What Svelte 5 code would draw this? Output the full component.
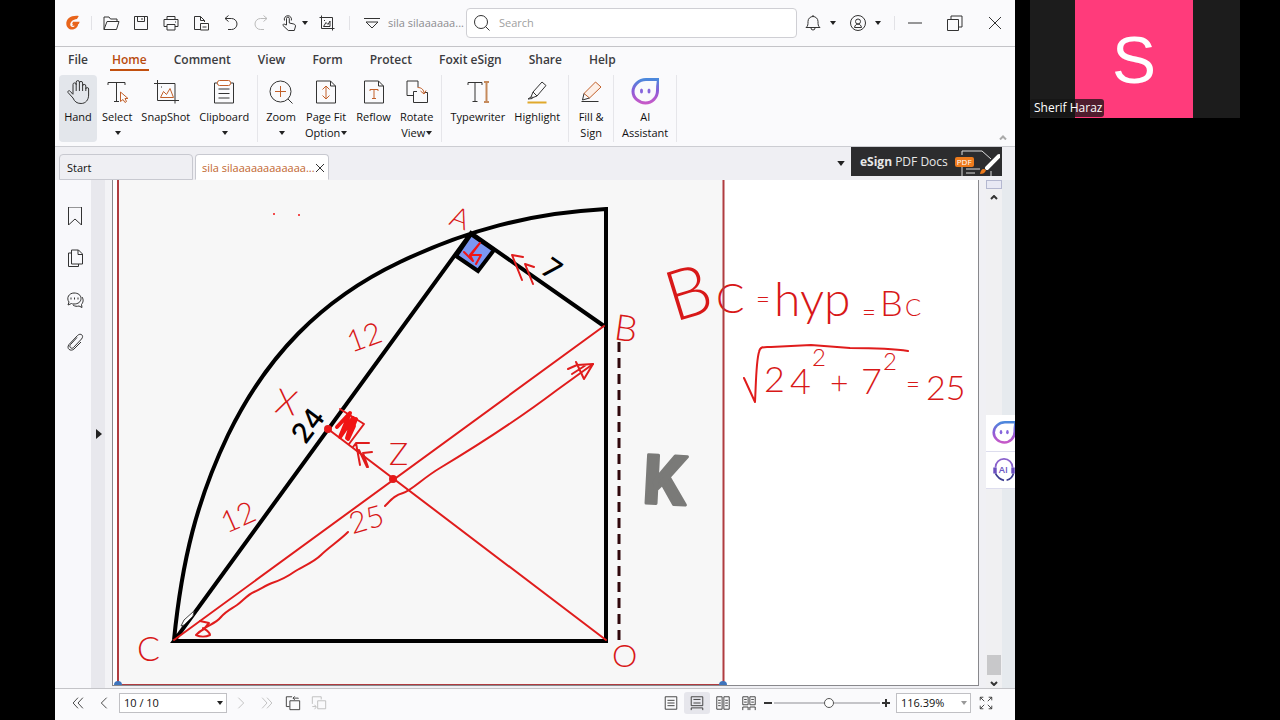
<script lang="ts">
    type Tool = { label: string; icon: string; second?: string; arrow?: boolean; active?: boolean };

    const menus = ["File", "Home", "Comment", "View", "Form", "Protect", "Foxit eSign", "Share", "Help"];

    const ribbon: Tool[][] = [
        [
            { label: "Hand", icon: "hand", active: true },
            { label: "Select", icon: "select", arrow: true },
            { label: "SnapShot", icon: "snapshot" },
            { label: "Clipboard", icon: "clipboard", arrow: true },
        ],
        [
            { label: "Zoom", icon: "zoom", arrow: true },
            { label: "Page Fit", second: "Option", icon: "fit", arrow: true },
            { label: "Reflow", icon: "reflow" },
            { label: "Rotate", second: "View", icon: "rotate", arrow: true },
        ],
        [
            { label: "Typewriter", icon: "typewriter" },
            { label: "Highlight", icon: "highlight" },
        ],
        [{ label: "Fill &", second: "Sign", icon: "sign" }],
        [{ label: "AI", second: "Assistant", icon: "ai" }],
    ];

    const quick = [
        { name: "Open", icon: "open" },
        { name: "Save", icon: "save" },
        { name: "Print", icon: "print" },
        { name: "Export", icon: "export" },
        { name: "Undo", icon: "undo" },
        { name: "Redo", icon: "redo" },
    ];

    const panels = [
        { name: "Bookmarks", icon: "bookmark" },
        { name: "Pages", icon: "pages" },
        { name: "Comments", icon: "comments" },
        { name: "Attachments", icon: "clip" },
    ];

    const layouts = [
        { name: "Single page", icon: "single" },
        { name: "Continuous", icon: "continuous" },
        { name: "Facing", icon: "facing" },
        { name: "Continuous facing", icon: "facingContinuous" },
    ];

    // 28px grid, ribbon
    const large: Record<string, string> = {
        hand: `<path d="M9 16V6.500a1.600 1.600 0 0 1 3.200 0V13M12.200 7V4.200a1.600 1.600 0 0 1 3.200 0V13M15.400 5a1.600 1.600 0 0 1 3.200 0v8M18.600 8a1.600 1.600 0 0 1 3.200 0v5M21.800 11a1.400 1.400 0 0 1 2.800 0v6c0 5-3 8.500-7.500 8.500-4.500 0-6.500-2-8.100-5.500L4 14.500c-.700-1.700 1.500-2.500 2.500-1L9 16.500"/>`,
        select: `<path d="M5 7V4.500h17V7M13.500 4.500v19M11 23.500h5"/><path class="accent" d="M17.500 14v9.500l2.500-2 2 3 1.500-1-1.500-3h3z"/>`,
        snapshot: `<path d="M2 5.500h21v20M5.500 2v20.500H27"/><path class="accent" d="M8.500 19.500l3-6 3 3 3.500-6 3.500 9z"/><path d="M9 9h1"/>`,
        clipboard: `<path d="M8 5H4.500v20h19V5H20M8.500 11h11M8.500 15.500h11M8.500 20h11"/><rect class="accent paper" x="7.500" y="2.500" width="13" height="5" rx="2"/>`,
        zoom: `<circle cx="13.500" cy="13.500" r="10.500"/><path d="M21 21l4.500 4.500"/><path class="accent" d="M8 13.500h11M13.500 8v11"/>`,
        fit: `<path d="M4.500 3h14l5 5v17h-19zM18.500 3v5h5"/><path class="accent" d="M14 8v13M10.500 11.500L14 8l3.500 3.500M10.500 17.500L14 21l3.500-3.500"/>`,
        reflow: `<path d="M4.500 3h14l5 5v17h-19zM18.500 3v5h5"/><path class="accent" d="M10 13v-1.500h8V13M14 11.500v9M12 20.500h4"/>`,
        rotate: `<path d="M10 17.500H4V3h11v6M14 13.500h-3.500v11h14v-10h-3"/><path class="accent" d="M14.500 9.500c4 0 6.500 2 6.500 6.500M17.500 13l3.500 3 2-3.500"/>`,
        typewriter: `<path d="M4 7V4.500h14V7M11 4.500v19M8.500 23.500h5"/><path class="tan" d="M20 4h5M22.500 4v20M20 24h5"/>`,
        highlight: `<path d="M10 14l9-10 4 3.500-9 10.500zM10 14l-2 5 2 .500 4-1.500M8 19l-3 2 4.500-.500"/><path class="gold" d="M4.500 24.500h19"/>`,
        sign: `<path class="accent peach" d="M7 15.500L18.500 4 24 9 12.500 20z"/><path d="M7 15.500L5.500 22l7-2M4.500 23.500h17"/>`,
        ai: `<path class="ai" d="M15 1.500h12.500c-.500 3.500-1 6-1 11 0 7-5.500 12.500-12 12.500S2 20 2 13.500 8 1.500 15 1.500z"/><ellipse class="eye" cx="10.500" cy="13" rx="1.500" ry="2.500"/><ellipse class="eye" cx="18" cy="13" rx="1.500" ry="2.500"/>`,
    };

    // 18px grid, everything else
    const small: Record<string, string> = {
        open: `<path d="M2 15.500V3h5l1.500 2H15v2.500M2 15.500L5 7.500h12L14.500 15.500z"/>`,
        save: `<path d="M2.500 2.500h13v13h-13zM5.500 2.500v5h7v-5M10 4v2"/>`,
        print: `<path d="M5 5.500v-3h8v3M5 12.500H2v-7h14v7h-3M5 10.500h8v5.500H5zM13 8h1"/>`,
        export: `<path d="M8 15.500H2.500v-13h6l4 4V8M8.500 2.500v4h4M8.500 9.500h8v6.500h-8zM10.500 13h4"/>`,
        undo: `<path d="M6.500 1.500L3 4.500l3.500 3M3 4.500h6.500a5.500 5.500 0 0 1 0 11H6"/>`,
        redo: `<path d="M11.500 1.500L15 4.500l-3.500 3M15 4.500H8.500a5.500 5.500 0 0 0 0 11H12"/>`,
        touch: `<path d="M6.500 11V4.500a1.400 1.400 0 0 1 2.800 0V9l4.500 1c1.500.500 2 1.500 1.500 3l-1 3.500h-6L3 11.500c-.500-1.200 1-2 2-1zM4.500 6.500a3.600 3.600 0 1 1 6.800 0"/>`,
        crop: `<path d="M1.500 3.500h13v13M3.500 1.500v13h13M5.500 12.500l2.500-4 2 2 2-3.500v5.500zM6 6.500h1"/>`,
        more: `<path d="M1 4.500h16M3 8h12l-6 6z"/>`,
        search: `<circle cx="8" cy="8" r="6.500"/><path d="M12.500 12.500l4 4"/>`,
        bell: `<path d="M2 13.500c2-1.500 2-3 2-6a5 5 0 0 1 10 0c0 3 0 4.500 2 6zM7 14a2 2 0 0 0 4 0M9 2.500V1"/>`,
        user: `<circle cx="9" cy="9" r="7.500"/><circle cx="9" cy="7.500" r="2.500"/><path d="M5.500 13.500c.500-4.500 6.500-4.500 7 0z"/>`,
        minimize: `<path d="M2 9h14"/>`,
        restore: `<path d="M1.500 5.500h11v11h-11zM5 5V2h11v11h-3"/>`,
        close: `<path d="M3 3l12 12M15 3L3 15"/>`,
        bookmark: `<path d="M2.500 0h13v18L9 12l-6.500 6z"/>`,
        pages: `<path d="M5.500 1h7l4 4v10h-11zM12 1v4.500h4.500M5.500 4H2.500v13.500h10V15"/>`,
        comments: `<path d="M8 2c4 0 7 2 7 5.500S12 13 8 13c-1 0-2 0-2.500-.500L2 14l1-3C0 7 3 2 8 2zM16 6c2 3 1 5.500-.500 7.500l.500 3-3-1.500c-2 .500-4 .500-6-1"/><path class="heavy" d="M4.500 7.500h1M8 7.500h1M11.500 7.500h1"/>`,
        clip: `<path d="M11 4.500l-6.500 7c-2 2.500 1 5 3 3l8-8.500c3-3.500-1-6.500-4-3.500l-8.500 9c-3 4 1.500 7.500 5 4.500l7-7"/>`,
        first: `<path d="M9 3L3.500 9 9 15M14.500 3L9 9l5.500 6"/>`,
        prev: `<path d="M12 3L6 9l6 6"/>`,
        next: `<path d="M6 3l6 6-6 6"/>`,
        last: `<path d="M3.500 3L9 9l-5.500 6M9 3l5.500 6L9 15"/>`,
        back: `<path d="M5 13H1.500V2H8M15 4v-.500H9M11 1.500l-2 2 2 2M5.500 6.500h11v10h-11z"/>`,
        forward: `<path d="M1.500 10V2h10v3M1.500 13h4M4 11l2 2.500L4 16M7.500 6.500h9v9h-9z"/>`,
        single: `<path d="M2.500 2h13v14h-13zM5 6h8M5 9h8M5 12h8"/>`,
        continuous: `<path d="M2.500 2h13v10h-13zM5 5h8M5 9h8M2.500 17v-2.500h13V17"/>`,
        facing: `<path d="M2 2h6v14H2zM10 2h6v14h-6zM3.500 6h3M3.500 9h3M3.500 12h3M11.500 6h3M11.500 9h3M11.500 12h3"/>`,
        facingContinuous: `<path d="M2 2h6v9H2zM10 2h6v9h-6zM3.500 5h3M3.500 8h3M11.500 5h3M11.500 8h3M2 17v-3.500h6V17M10 17v-3.500h6V17"/>`,
        full: `<path d="M7 7L2.500 2.500M2.500 6V2.500H6M11 7l4.500-4.500M12 2.500h3.500V6M7 11l-4.500 4.500M2.500 12v3.500H6M11 11l4.500 4.500M12 15.500h3.500V12"/>`,
    };

    let page = $state("10 / 10");
    let scale = $state("116.39%");
    let zoomLevel = $state(52);
    let query = $state("");
</script>

{#snippet glyph(name: string)}
    <svg class="glyph" viewBox="0 0 18 18" aria-hidden="true">{@html small[name]}</svg>
{/snippet}

{#snippet caret()}
    <svg class="caret" viewBox="0 0 6 4" aria-hidden="true"><path d="M0 0h6L3 4z" /></svg>
{/snippet}

<svg class="defs" aria-hidden="true">
    <defs>
        <linearGradient id="aiGradient" x1="0" y1="0" x2="0" y2="1">
            <stop offset="0" stop-color="#4c88dc" />
            <stop offset="0.5" stop-color="#8b5cd8" />
            <stop offset="1" stop-color="#c659c8" />
        </linearGradient>
    </defs>
</svg>

<div class="share">
    <main class="app">
        <header class="titlebar">
            <svg class="logo" viewBox="0 0 18 18" aria-hidden="true">
                <path d="M15.500 1C7 0 1 4 1.500 10.500 2 15 6 17.500 10 16c3.500-1.200 5-4 5-7h-5.500L8 12h3c-1 2-4.500 2-5-.500C5.500 8 9 5 13.500 4.500z" />
                <path d="M9 7.500h7.500l-1 2.500H8z" />
            </svg>
            <span class="rule"></span>
            {#each quick as item}
                <button class="tool" class:dim={item.icon === "redo"} aria-label={item.name}>{@render glyph(item.icon)}</button>
            {/each}
            <button class="tool wide" aria-label="Touch mode">{@render glyph("touch")}{@render caret()}</button>
            <button class="tool" aria-label="Crop">{@render glyph("crop")}</button>
            <span class="rule"></span>
            <button class="tool" aria-label="Customize">{@render glyph("more")}</button>
            <span class="docname">sila silaaaaaa...</span>
            <label class="search">
                {@render glyph("search")}
                <input type="text" placeholder="Search" aria-label="Search" bind:value={query} />
            </label>
            <button class="tool account" aria-label="Notifications">{@render glyph("bell")}{@render caret()}</button>
            <button class="tool account" aria-label="Account">{@render glyph("user")}{@render caret()}</button>
            <span class="rule last"></span>
            <button class="tool win" aria-label="Minimize">{@render glyph("minimize")}</button>
            <button class="tool win" aria-label="Restore">{@render glyph("restore")}</button>
            <button class="tool win" aria-label="Close">{@render glyph("close")}</button>
        </header>

        <nav class="menus">
            {#each menus as menu}
                <button class:current={menu === "Home"}>{menu}</button>
            {/each}
        </nav>

        <section class="ribbon">
            {#each ribbon as group}
                <div class="group">
                    {#each group as tool}
                        <button class:active={tool.active}>
                            <svg class="big" viewBox="0 0 28 28" aria-hidden="true">{@html large[tool.icon]}</svg>
                            <span>{tool.label}</span>
                            <span class="second">
                                {tool.second ?? ""}{#if tool.arrow}{@render caret()}{/if}
                            </span>
                        </button>
                    {/each}
                </div>
            {/each}
            <button class="collapse" aria-label="Collapse ribbon">
                <svg viewBox="0 0 8 5" aria-hidden="true"><path d="M1 4.500l3-3 3 3" /></svg>
            </button>
        </section>

        <div class="tabs">
            <button class="tab">Start</button>
            <div class="tab open">
                <button class="tabname">sila silaaaaaaaaaaaa...</button>
                <button class="shut" aria-label="Close tab">
                    <svg viewBox="0 0 8 8" aria-hidden="true"><path d="M0 0l8 8M8 0L0 8" /></svg>
                </button>
            </div>
            <button class="tablist" aria-label="Tab list">
                <svg class="caret" viewBox="0 0 6 4" aria-hidden="true"><path d="M0 0h6L3 4z" /></svg>
            </button>
            <a class="banner" href="#esign">
                <span><b>eSign</b> PDF Docs</span>
                <span class="tag">PDF</span>
                <svg viewBox="0 0 40 29" aria-hidden="true">
                    <path d="M2 8V4h20l9 8M2 20v9M6 22h14M6 26h9M31 24v5" />
                    <path class="pen" d="M27 21L39 9" />
                    <path class="tip" d="M20 27c1-5 3-6 6-4-1 3-3 4-6 4z" />
                </svg>
            </a>
        </div>

        <section class="workspace">
            <aside class="rail">
                {#each panels as panel}
                    <button aria-label={panel.name}>{@render glyph(panel.icon)}</button>
                {/each}
            </aside>
            <button class="splitter" aria-label="Show panel">
                <svg viewBox="0 0 6 10" aria-hidden="true"><path d="M0 0l6 5-6 5z" /></svg>
            </button>

            <div class="paper">
                <svg class="sheet" viewBox="113 180 865 508" preserveAspectRatio="xMinYMin slice" role="img" aria-label="Geometry exercise">
                    <rect class="scan" x="118" y="180" width="605" height="505" />

                    <g class="figure">
                        <path d="M174 640C182 560 197 500 228 435 266 357 320 300 400 262 465 231 530 213 606 209V641H174L471 233L604 326" />
                        <path class="corner" d="M471 234l23 16-16 21-22-15z" />
                        <path class="dashes" d="M619 342V640" />
                    </g>
                    <g class="print">
                        <text x="-18" y="10" transform="translate(308 425) rotate(-53)">24</text>
                        <text x="-8" y="10" transform="translate(552 269) rotate(35)">7</text>
                        <text class="huge" x="-22" y="25" transform="translate(665 479) rotate(3)">K</text>
                    </g>

                    <g class="ink">
                        <path d="M174 640L604 326M606 640L328 429" />
                        <path d="M203 629c8-5 13-6 18-12s10-8 16-12 10-10 17-13 12-7 18-9 15-6 22-11 19-9 27-17 18-14 27-23M385 506c6-6 10-11 18-13s20-15 37-25c40-24 80-50 117-78l36-26" />
                        <path d="M200 621l9 2-5 6c-4 2-6 4-8 6 4 2 10 2 14 0 0-3-4-5-7-7" />
                        <path d="M568 369l9-4 16-1-9 15-8-17M572 374l14-9" />
                        <path d="M353 447l3-4h13M356 443l4 22M363 453l9-1M363 453l5 14M359 450l8 17" />
                        <path d="M523 257l-11-2 10 25M534 267l-9-3 8 20" />
                        <path d="M340 409l24 15-15 20" />
                        <path class="scribble" d="M337 427l13-14-10 24 13-19-6 20 9-19-8 20 6-13" />
                        <path class="scribble thin" d="M464 252l9 9-3-6 10-12-9 12 10 0-5 9" />
                        <circle cx="328" cy="429" r="3" />
                        <circle cx="393" cy="479" r="3" />
                        <circle class="speck" cx="274" cy="214" r="1" />
                        <circle class="speck" cx="299" cy="215" r="1" />
                        <path d="M744 378l11 24c1-18 1-40 4-50 1-6 5-5 12-5l40-2 39 3c20 0 40 0 58 3" />
                        <text x="451" y="228" transform="rotate(20 460 218)" font-size="28">A</text>
                        <text x="347" y="348" transform="rotate(-20 363 338)" font-size="30">12</text>
                        <text x="276" y="414" transform="rotate(10 286 402)" font-size="34">X</text>
                        <text x="221" y="528" transform="rotate(-24 237 518)" font-size="30">12</text>
                        <text x="389" y="465" font-size="32">Z</text>
                        <text x="349" y="530" transform="rotate(-16 366 520)" font-size="30">25</text>
                        <text x="137" y="661" font-size="34">C</text>
                        <text x="612" y="667" font-size="32">O</text>
                        <text x="615" y="341" transform="rotate(8 627 326)" font-size="36">B</text>
                        <text x="667" y="317" transform="rotate(-17 688 295)" font-size="70">B</text>
                        <text x="716" y="313" font-size="42">C</text>
                        <text x="756" y="308" font-size="24">=</text>
                        <text x="774" y="316" font-size="48">hyp</text>
                        <text x="862" y="321" font-size="24">=</text>
                        <text x="880" y="316" font-size="36">B</text>
                        <text x="905" y="316" font-size="24">C</text>
                        <text x="764" y="392" font-size="36">2</text>
                        <text x="790" y="394" font-size="36">4</text>
                        <text x="812" y="366" font-size="24">2</text>
                        <text x="830" y="394" font-size="32">+</text>
                        <text x="861" y="394" font-size="36">7</text>
                        <text x="883" y="370" font-size="24">2</text>
                        <text x="906" y="393" font-size="24">=</text>
                        <text x="926" y="400" font-size="34">25</text>
                    </g>

                    <path class="frame" d="M118 180V685H723.500V180" />
                    <circle class="handle" cx="118" cy="685" r="4" />
                    <circle class="handle" cx="723" cy="685" r="4" />
                    <path class="nib" d="M181 626l3-6 10-9-1 5-9 9z" />
                </svg>
            </div>

            <div class="scrollbar">
                <span class="splitbox"></span>
                <button aria-label="Scroll up"><svg viewBox="0 0 8 5" aria-hidden="true"><path d="M1 4l3-3 3 3" /></svg></button>
                <span class="track"><span class="thumb"></span></span>
                <button aria-label="Scroll down"><svg viewBox="0 0 8 5" aria-hidden="true"><path d="M1 1l3 3 3-3" /></svg></button>
            </div>
            <div class="edge"></div>

            <div class="assistants">
                <button aria-label="AI assistant">
                    <svg viewBox="0 0 28 28" aria-hidden="true">{@html large.ai}</svg>
                </button>
                <button aria-label="AI support">
                    <svg viewBox="0 0 28 28" aria-hidden="true">
                        <path class="headset" d="M4 11a10 10 0 0 1 20 0" />
                        <path class="cable" d="M4 18c2 4 5 7 10 8M25 18c-1 5-4 7-8 8" />
                        <path class="cups" d="M3.500 11v7M24.500 11v7" />
                        <text x="8" y="18">AI</text>
                    </svg>
                </button>
            </div>
        </section>

        <footer class="status">
            <button class="step" aria-label="First page">{@render glyph("first")}</button>
            <button class="step" aria-label="Previous page">{@render glyph("prev")}</button>
            <span class="combo pageno">
                <select aria-label="Page" bind:value={page}><option>10 / 10</option></select>
                {@render caret()}
            </span>
            <button class="step dim" aria-label="Next page">{@render glyph("next")}</button>
            <button class="step dim" aria-label="Last page">{@render glyph("last")}</button>
            <button class="step" aria-label="Previous view">{@render glyph("back")}</button>
            <button class="step dim" aria-label="Next view">{@render glyph("forward")}</button>
            <span class="fill"></span>
            {#each layouts as layout}
                <button class="step" class:chosen={layout.icon === "continuous"} aria-label={layout.name}>{@render glyph(layout.icon)}</button>
            {/each}
            <button class="sign" aria-label="Zoom out"><svg viewBox="0 0 8 8" aria-hidden="true"><path d="M0 4h8" /></svg></button>
            <input class="slider" type="range" min="0" max="100" aria-label="Zoom" bind:value={zoomLevel} />
            <button class="sign" aria-label="Zoom in"><svg viewBox="0 0 8 8" aria-hidden="true"><path d="M0 4h8M4 0v8" /></svg></button>
            <span class="combo level">
                <select aria-label="Zoom level" bind:value={scale}><option>116.39%</option></select>
                {@render caret()}
            </span>
            <button class="step" aria-label="Full screen">{@render glyph("full")}</button>
        </footer>
    </main>

    <aside class="people">
        <div class="tile">
            <div class="avatar">S</div>
            <span class="name">Sherif Haraz</span>
        </div>
    </aside>
</div>

<style>
    :global(body) {
        background: #000;
    }

    .defs {
        position: absolute;
        width: 0;
        height: 0;
    }

    .share {
        display: grid;
        grid-template-columns: minmax(0, 1fr) 265px;
        height: 100vh;
        padding-left: 55px;
        box-sizing: border-box;
        overflow: hidden;
        font-family: "Open Sans", "Noto Sans", sans-serif;
        font-size: 11px;
        line-height: 16px;
        color: #222;
    }

    .app {
        display: flex;
        flex-direction: column;
        min-width: 0;
        min-height: 0;
        background: #fafafc;
    }

    button,
    input,
    select {
        margin: 0;
        padding: 0;
        border: none;
        background: none;
        font: inherit;
        color: inherit;
    }

    svg {
        display: block;
        flex: none;
        fill: none;
        stroke: #333;
    }

    .glyph {
        width: 18px;
        height: 18px;
    }

    .caret {
        width: 6px;
        height: 4px;
        fill: #222;
        stroke: none;
    }

    .dim svg {
        stroke: #bbb;
    }

    /* title bar */
    .titlebar {
        display: flex;
        align-items: center;
        height: 46px;
        padding: 0 0 0 10px;
        border-bottom: 1px solid #c4c4c8;
        flex: none;
    }

    .logo {
        width: 16px;
        height: 16px;
        fill: #e8641b;
        stroke: none;
    }

    .rule {
        width: 1px;
        height: 14px;
        margin: 0 7px;
        background: #e2e2e6;
    }

    .rule.last {
        margin-right: 0;
    }

    .logo + .rule {
        margin: 0 4px 0 10px;
    }

    .tool {
        display: flex;
        align-items: center;
        justify-content: center;
        gap: 4px;
        width: 30px;
        height: 30px;
        flex: none;
    }

    .tool .glyph {
        width: 18px;
        height: 18px;
    }

    .tool.wide {
        width: 36px;
    }

    .tool.account {
        width: 45px;
        gap: 8px;
    }

    .tool.win {
        width: 40px;
    }

    .docname {
        width: 78px;
        padding-left: 1px;
        white-space: nowrap;
        color: #8c8c90;
    }

    .search {
        display: flex;
        align-items: center;
        gap: 8px;
        flex: 1;
        min-width: 0;
        height: 28px;
        padding: 0 6px;
        border: 1px solid #cfcfd4;
        border-radius: 4px;
        background: #fff;
    }

    .search input {
        flex: 1;
        min-width: 0;
        outline: none;
    }

    .search input::placeholder {
        color: #a0a0a0;
        opacity: 1;
    }

    /* menus */
    .menus {
        display: flex;
        gap: 1px;
        height: 28px;
        flex: none;
        font-size: 12px;
        font-weight: 600;
        color: #3c3c40;
    }

    .menus button {
        height: 24px;
        margin: 0 11px;
        padding: 4px 2px 0;
        border-bottom: 2px solid transparent;
        white-space: nowrap;
    }

    .menus button:first-child {
        margin-right: 8px;
    }

    .menus .current {
        border-color: #c2500f;
        color: #b84a0c;
    }

    /* ribbon */
    .ribbon {
        display: flex;
        height: 71px;
        padding-left: 4px;
        border-bottom: 1px solid #cccdd2;
        flex: none;
    }

    .group {
        display: flex;
        gap: 1px;
        height: 67px;
        margin-right: 4px;
        padding-right: 4px;
        border-right: 1px solid #e6e6ea;
    }

    .group button {
        display: flex;
        flex-direction: column;
        align-items: center;
        padding: 3px 4px 0;
        border-radius: 4px;
        white-space: nowrap;
        color: #111;
    }

    .group .active {
        padding: 3px 5px 0;
        background: #e3e6eb;
    }

    .big {
        width: 28px;
        height: 28px;
        margin-bottom: 3px;
    }

    .second {
        display: flex;
        align-items: center;
        height: 16px;
    }

    .second .caret {
        margin-left: 1px;
    }

    .ribbon :global(.accent) {
        stroke: #c2602a;
    }

    .ribbon :global(.paper) {
        fill: #fff;
    }

    .ribbon :global(.peach) {
        fill: #fdf0e8;
    }

    .ribbon :global(.tan) {
        stroke: #c58a5c;
        stroke-width: 2;
    }

    .ribbon :global(.gold) {
        stroke: #e0a92c;
        stroke-width: 2;
    }

    .app :global(.ai) {
        stroke: url(#aiGradient);
        stroke-width: 3;
    }

    .app :global(.eye) {
        fill: #8665dc;
        stroke: none;
    }

    .glyph :global(.heavy) {
        stroke-width: 2;
    }

    .collapse {
        align-self: flex-end;
        margin: 0 8px 6px auto;
    }

    .collapse svg,
    .scrollbar svg {
        width: 8px;
        height: 5px;
        stroke-width: 2;
    }

    .collapse svg {
        stroke: #aaa;
    }

    /* document tabs */
    .tabs {
        display: flex;
        align-items: flex-end;
        gap: 2px;
        height: 33px;
        padding: 0 13px 0 4px;
        background: #efeff3;
        flex: none;
    }

    .tab {
        display: flex;
        align-items: center;
        justify-content: space-between;
        width: 134px;
        height: 26px;
        padding: 2px 7px 0;
        box-sizing: border-box;
        border: 1px solid #c8c9d0;
        border-radius: 4px 4px 0 0;
        color: #111;
    }

    .tab.open {
        padding: 2px 4px 0 6px;
        border-bottom-color: #fff;
        background: #fff;
        color: #c2662e;
    }

    .tabname {
        white-space: nowrap;
    }

    .shut svg {
        width: 8px;
        height: 8px;
    }

    .tablist {
        align-self: center;
        margin-left: auto;
        padding: 0 4px;
    }

    .tablist .caret {
        width: 8px;
        height: 5px;
    }

    .banner {
        display: flex;
        align-items: center;
        align-self: flex-start;
        width: 151px;
        height: 29px;
        padding-left: 9px;
        box-sizing: border-box;
        overflow: hidden;
        background: #2c2c2e;
        color: #e8e8e8;
        font-size: 12px;
        text-decoration: none;
        white-space: nowrap;
    }

    .tag {
        z-index: 1;
        margin: 0 -14px 0 7px;
        padding: 0 2px;
        border-radius: 2px;
        background: #ee7b1c;
        color: #fff;
        font-size: 8px;
        line-height: 10px;
    }

    .banner svg {
        width: 40px;
        height: 29px;
        stroke: #ddd;
    }

    .banner .pen {
        stroke: #fff;
        stroke-width: 4;
        stroke-linecap: round;
    }

    .banner .tip {
        fill: #ee7b1c;
        stroke: none;
    }

    /* workspace */
    .workspace {
        position: relative;
        display: flex;
        flex: 1;
        min-height: 0;
        background: #f0f0f4;
    }

    .rail {
        display: flex;
        flex-direction: column;
        gap: 20px;
        width: 36px;
        padding: 25px 0 0 4px;
        box-sizing: border-box;
        background: #f8f8fb;
    }

    .rail button {
        display: flex;
        align-items: center;
        justify-content: center;
        height: 22px;
    }

    .splitter {
        display: flex;
        align-items: center;
        width: 21px;
        padding-left: 5px;
        background: linear-gradient(90deg, #e8e8ed 14px, #f3f3f6 14px);
    }

    .splitter svg {
        width: 6px;
        height: 10px;
        fill: #222;
        stroke: none;
    }

    .paper {
        flex: 1;
        min-width: 0;
        margin-bottom: 2px;
        overflow: hidden;
        border: 1px solid #88888c;
        border-top: none;
        background: #fff;
    }

    .sheet {
        width: 865px;
        height: 508px;
    }

    .scan {
        fill: #f7f7f7;
        stroke: none;
    }

    .figure path {
        stroke: #000;
        stroke-width: 4;
    }

    .figure .corner {
        fill: #7b96f2;
    }

    .figure .dashes {
        stroke: #30080c;
        stroke-width: 3;
        stroke-dasharray: 10 6;
    }

    .print text {
        fill: #000;
        stroke: none;
        font-family: Inter, "Liberation Sans", sans-serif;
        font-size: 28px;
        font-weight: 500;
    }

    .print .huge {
        fill: #7a7a78;
        stroke: #7a7a78;
        stroke-width: 3;
        stroke-linejoin: round;
        font-family: Roboto, sans-serif;
        font-size: 68px;
        font-weight: 700;
    }

    .ink {
        stroke: #e01c1c;
        stroke-width: 2;
        stroke-linecap: round;
        stroke-linejoin: round;
    }

    .ink circle {
        fill: #f01414;
    }

    .ink .scribble {
        stroke: #f01414;
        stroke-width: 4;
    }

    .ink .thin {
        stroke-width: 2;
    }

    .ink .speck {
        stroke: none;
    }

    .ink text {
        fill: #d81818;
        stroke: none;
        font-family: Lato, "Open Sans", sans-serif;
        font-weight: 300;
    }

    .frame {
        stroke: #b03c40;
        stroke-width: 2;
    }

    .handle {
        fill: #3f74bc;
        stroke: none;
    }

    .nib {
        fill: #fff;
        stroke: #444;
    }

    .scrollbar {
        display: flex;
        flex-direction: column;
        align-items: center;
        width: 16px;
        margin-left: 7px;
        background: #f0f0f2;
    }

    .splitbox {
        width: 14px;
        height: 7px;
        border: 1px solid #b4b8d0;
        background: #e8e9f4;
    }

    .scrollbar button {
        padding: 6px 4px;
    }

    .scrollbar button:last-child {
        padding: 5px 4px 2px;
    }

    .track {
        display: flex;
        flex: 1;
        align-items: flex-end;
    }

    .thumb {
        width: 14px;
        height: 20px;
        margin-bottom: 1px;
        background: #c8c8ca;
    }

    .edge {
        width: 13px;
        background: #e6eaee;
    }

    .assistants {
        position: absolute;
        top: 235px;
        right: 0;
        width: 29px;
        overflow: hidden;
        background: #fff;
    }

    .assistants button {
        display: block;
        width: 29px;
        height: 37px;
        padding-left: 6px;
        border-bottom: 1px solid #dde;
    }

    .assistants svg {
        width: 24px;
        height: 24px;
    }

    .headset {
        stroke: #8a62cc;
        stroke-width: 2;
    }

    .cable {
        stroke: #3c3c90;
        stroke-width: 2;
    }

    .cups {
        stroke: #6c50c0;
        stroke-width: 4;
    }

    .assistants text {
        fill: #6a58c4;
        stroke: none;
        font-size: 11px;
        font-weight: 600;
    }

    /* status bar */
    .status {
        display: flex;
        align-items: center;
        height: 32px;
        padding: 0 16px 3px 10px;
        box-sizing: border-box;
        border-top: 1px solid #c4c4c8;
        flex: none;
    }

    .step {
        display: flex;
        align-items: center;
        justify-content: center;
        width: 26px;
        height: 22px;
        flex: none;
    }

    .step .glyph {
        width: 16px;
        height: 16px;
    }

    .step.chosen {
        border-radius: 3px;
        background: #e6e6ec;
    }

    .fill {
        flex: 1;
    }

    .combo {
        display: flex;
        align-items: center;
        height: 20px;
        padding-right: 3px;
        box-sizing: border-box;
        border: 1px solid #c0c0c4;
        background: #fff;
    }

    .combo select {
        flex: 1;
        min-width: 0;
        padding-left: 4px;
        appearance: none;
        color: #111;
    }

    .pageno {
        width: 108px;
        margin: 0 1px 0 2px;
    }

    .level {
        width: 75px;
        margin: 0 2px 0 4px;
    }

    .level .caret {
        fill: #999;
    }

    .sign {
        padding: 0 2px;
    }

    .sign svg {
        width: 8px;
        height: 8px;
        stroke-width: 2;
    }

    .slider {
        width: 106px;
        height: 12px;
        appearance: none;
    }

    .slider::-webkit-slider-runnable-track {
        height: 2px;
        background: #c4c4c8;
    }

    .slider::-webkit-slider-thumb {
        width: 10px;
        height: 10px;
        margin-top: -4px;
        box-sizing: border-box;
        border: 1px solid #555;
        border-radius: 50%;
        background: #fff;
        appearance: none;
    }

    /* meeting participants */
    .people {
        padding: 0 40px 0 15px;
    }

    .tile {
        position: relative;
        display: flex;
        justify-content: center;
        height: 118px;
        padding-right: 2px;
        background: #1c1c1c;
    }

    .avatar {
        width: 118px;
        background: #ff3b7b;
        color: #fff;
        font-family: "Liberation Sans", sans-serif;
        font-size: 66px;
        line-height: 120px;
        text-align: center;
    }

    .name {
        position: absolute;
        left: 0;
        bottom: 1px;
        padding: 1px 2px 1px 4px;
        border-radius: 3px;
        background: rgba(20, 20, 20, 0.75);
        color: #fff;
        font-size: 12px;
    }
</style>
